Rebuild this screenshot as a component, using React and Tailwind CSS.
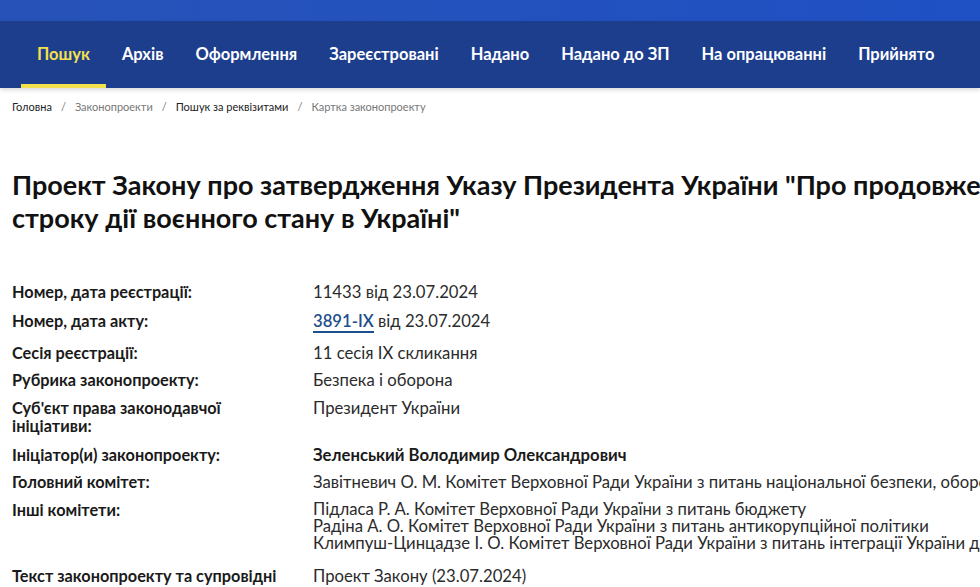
const tabs = ["Пошук", "Архів", "Оформлення", "Зареєстровані", "Надано", "Надано до ЗП", "На опрацюванні", "Прийнято"];

const Row = ({ label, children, className = "" }) => (
    <div className={"flex " + className}>
        <div className="w-[301px] shrink-0 font-bold text-[16.3px] text-[#1a1a1a] leading-[18px]">{label}</div>
        <div className="whitespace-nowrap text-[16.7px] text-[#2b2b2b] leading-[18px]">{children}</div>
    </div>
);

export default function App() {
    return (
        <div className="w-[980px] h-[587px] overflow-hidden bg-white font-['Lato','Noto_Sans',sans-serif]">
            <div className="h-[21px] bg-gradient-to-r from-[#2753b8] to-[#1f50c4]"></div>
            <nav className="h-[67px] bg-[#1d3e8d] flex items-stretch pl-[21px] shadow-[0_2px_4px_rgba(0,0,0,0.15)]">
                {tabs.map((t, i) => (
                    <div
                        key={t}
                        className={
                            "flex items-center shrink-0 whitespace-nowrap px-[16px] text-[16.5px] font-bold border-b-4 pt-1 " +
                            (i === 0 ? "text-[#f4e04d] border-[#f4e04d]" : "text-white border-transparent")
                        }
                    >
                        {t}
                    </div>
                ))}
            </nav>
            <div className="pl-3 pt-[11px] flex items-center gap-[9px] text-[11px] text-[#777]">
                <span className="text-[#222]">Головна</span>
                <span>/</span>
                <span>Законопроекти</span>
                <span>/</span>
                <span className="text-[#222]">Пошук за реквізитами</span>
                <span>/</span>
                <span>Картка законопроекту</span>
            </div>
            <h1 className="pl-3 mt-[52px] text-[27px] font-bold leading-[33px] text-[#111] whitespace-nowrap">
                Проект Закону про затвердження Указу Президента України "Про продовження
                <br />
                строку дії воєнного стану в Україні"
            </h1>
            <div className="pl-3 mt-[49px] flex flex-col">
                <Row label="Номер, дата реєстрації:">11433 від 23.07.2024</Row>
                <Row label="Номер, дата акту:" className="mt-[11px]">
                    <span className="font-semibold text-[#1d4f8c] border-b-2 border-[#1d4f8c]">3891-IX</span> від 23.07.2024
                </Row>
                <Row label="Сесія реєстрації:" className="mt-[14px]">11 сесія IX скликання</Row>
                <Row label="Рубрика законопроекту:" className="mt-[9px]">Безпека і оборона</Row>
                <Row label={<>Суб'єкт права законодавчої<br />ініціативи:</>} className="mt-[10px]">Президент України</Row>
                <Row label="Ініціатор(и) законопроекту:" className="mt-[11px]">
                    <span className="font-bold text-[#1a1a1a]">Зеленський Володимир Олександрович</span>
                </Row>
                <Row label="Головний комітет:" className="mt-[9px]">
                    Завітневич О. М. Комітет Верховної Ради України з питань національної безпеки, оборони та розвідки
                </Row>
                <Row label="Інші комітети:" className="mt-[10px]">
                    <div className="leading-[17px]">
                        Підласа Р. А. Комітет Верховної Ради України з питань бюджету
                        <br />
                        Радіна А. О. Комітет Верховної Ради України з питань антикорупційної політики
                        <br />
                        Климпуш-Цинцадзе І. О. Комітет Верховної Ради України з питань інтеграції України до Європейського Союзу
                    </div>
                </Row>
                <Row label="Текст законопроекту та супровідні" className="mt-[15px]">Проект Закону (23.07.2024)</Row>
            </div>
        </div>
    );
}
